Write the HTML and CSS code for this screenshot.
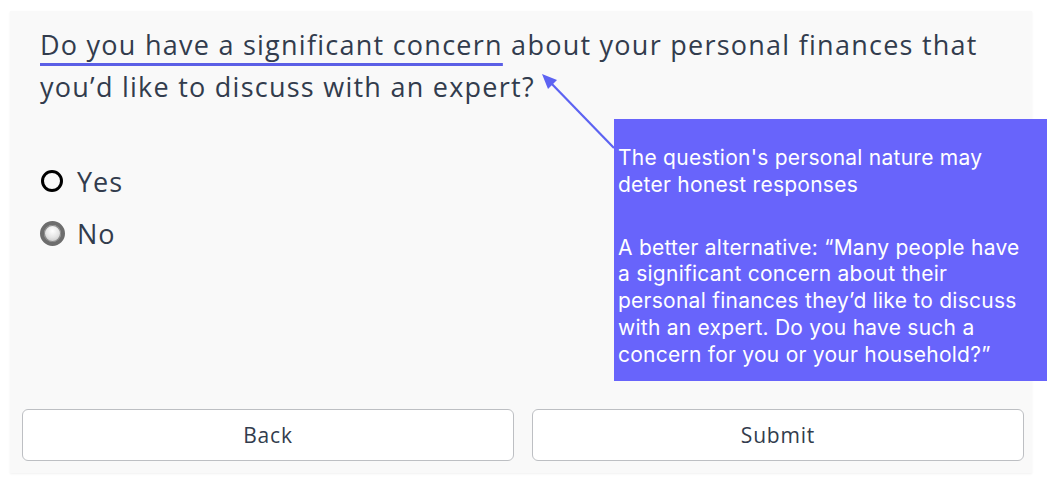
FILE: index.html
```html
<!DOCTYPE html>
<html>
<head>
<meta charset="utf-8">
<link rel="stylesheet" href="styles.css">
</head>
<body>
<div class="card">
  <div class="question">
    <span class="hl">Do you have a significant concern</span> about your personal finances that you’d like to discuss with an expert?
  </div>
  <div class="options">
    <div class="option"><span class="radio radio-yes"></span><span class="label">Yes</span></div>
    <div class="option"><span class="radio radio-no"></span><span class="label">No</span></div>
  </div>
  <div class="buttons">
    <button class="btn">Back</button>
    <button class="btn">Submit</button>
  </div>
</div>
<svg class="arrow" width="1059" height="488" viewBox="0 0 1059 488">
  <line x1="614" y1="148" x2="549" y2="81" stroke="#5d63f2" stroke-width="2.2"/>
  <polygon points="542,74 557,80 548,89" fill="#5d63f2"/>
</svg>
<div class="note">
  <p>The question's personal nature may deter honest responses</p>
  <p>A better alternative: “Many people have a significant concern about their personal finances they’d like to discuss with an expert. Do you have such a concern for you or your household?”</p>
</div>
</body>
</html>
```

FILE: styles.css
```css
html, body {
  margin: 0;
  padding: 0;
  background: #ffffff;
}
body {
  width: 1059px;
  height: 488px;
  overflow: hidden;
  position: relative;
  font-family: "Open Sans", "Lato", sans-serif;
  color: #323c4d;
}
.card {
  margin: 11px 0 0 10px;
  width: 1022px;
  height: 462px;
  box-sizing: border-box;
  background: #f9f9f9;
  box-shadow: 0 1px 2px rgba(0,0,0,0.06);
  display: flex;
  flex-direction: column;
  padding: 13px 8px 12px 12px;
}
.question {
  padding-left: 18px;
  font-size: 27px;
  line-height: 42px;
  letter-spacing: 1.25px;
  width: 975px;
}
.hl {
  text-decoration: underline;
  text-decoration-color: #5b5fe6;
  text-decoration-thickness: 3px;
  text-underline-offset: 8px;
}
.options {
  padding-left: 19px;
  margin-top: 56px;
  display: flex;
  flex-direction: column;
  gap: 18px;
}
.option {
  display: flex;
  align-items: center;
  height: 34px;
}
.radio {
  width: 22px;
  height: 22px;
  box-sizing: border-box;
  border-radius: 50%;
  margin-right: 14px;
  flex: none;
}
.radio-yes {
  border: 3px solid #000;
  background: transparent;
}
.radio-no {
  border: 4px solid #6d6d6d;
  background: radial-gradient(circle at 50% 35%, #ffffff 0%, #e6e6e6 45%, #b8b8b8 100%);
  box-shadow: inset 0 0 0 1px #8a8a8a;
  width: 25px;
  height: 25px;
  margin-left: -1px;
  margin-right: 12px;
}
.label {
  font-size: 27px;
  letter-spacing: 1px;
}
.buttons {
  margin-top: auto;
  display: flex;
  gap: 18px;
}
.btn {
  flex: 1;
  height: 52px;
  background: #ffffff;
  border: 1px solid #bdbfc3;
  border-radius: 6px;
  font-family: "Open Sans", "Lato", sans-serif;
  font-size: 21px;
  letter-spacing: 0.8px;
  color: #323c4d;
  padding: 0;
}
.arrow {
  position: absolute;
  left: 0;
  top: 0;
  pointer-events: none;
}
.note {
  position: absolute;
  left: 614px;
  top: 119px;
  width: 433px;
  height: 262px;
  box-sizing: border-box;
  background: #6864fb;
  color: #ffffff;
  font-family: "Inter", sans-serif;
  font-size: 21px;
  line-height: 26.8px;
  letter-spacing: 0.25px;
  padding: 26px 14px 0 4px;
}
.note p {
  margin: 0;
}
.note p + p {
  margin-top: 36px;
}
```
